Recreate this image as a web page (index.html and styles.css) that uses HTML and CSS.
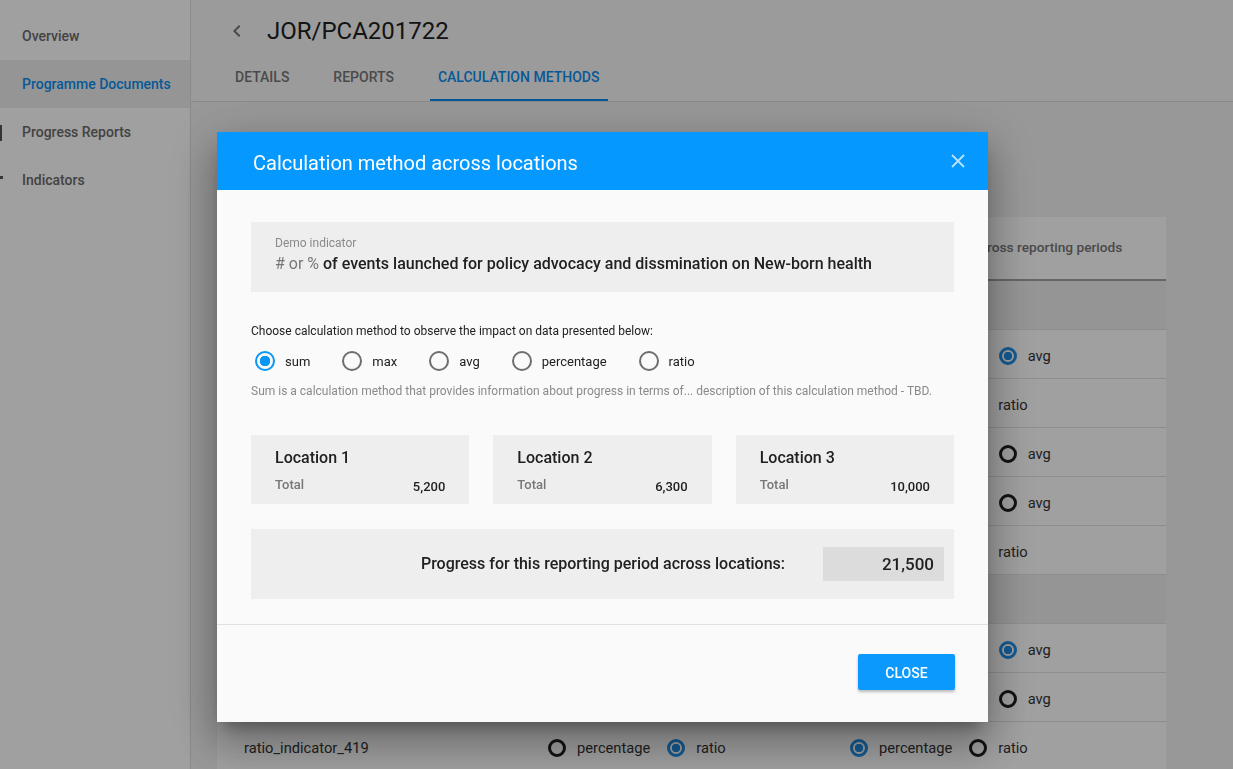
FILE: index.html
```html
<!DOCTYPE html>
<html>
<head>
<meta charset="utf-8">
<title>JOR/PCA201722 - Calculation methods</title>
<link rel="stylesheet" href="styles.css">
</head>
<body>
<div class="app">
  <aside class="sidebar">
    <a class="nav-item"><span class="nav-icon"></span>Overview</a>
    <a class="nav-item active"><span class="nav-icon"></span>Programme Documents</a>
    <a class="nav-item"><span class="nav-icon"><i class="mark-bar"></i></span>Progress Reports</a>
    <a class="nav-item"><span class="nav-icon"><i class="mark-sq"></i></span>Indicators</a>
  </aside>

  <main class="main">
    <header class="page-header">
      <div class="title-row">
        <svg class="back" viewBox="0 0 24 24" width="24" height="24"><path d="M15.41 7.41L14 6l-6 6 6 6 1.41-1.41L10.83 12z"/></svg>
        <h1 class="title">JOR/PCA201722</h1>
      </div>
      <nav class="tabs">
        <span class="tab">Details</span>
        <span class="tab">Reports</span>
        <span class="tab active">Calculation methods</span>
      </nav>
    </header>

    <section class="content">
      <div class="table-card">
        <div class="t-row t-head">
          <div class="c1"></div>
          <div class="c2"></div>
          <div class="c3">Calculation method across reporting periods</div>
        </div>
        <div class="t-row t-section"><div class="c1"></div></div>
        <div class="t-row">
          <div class="c1"></div><div class="c2"></div>
          <div class="c3"><span class="opt"><i class="rb"></i>sum</span><span class="opt"><i class="rb"></i>max</span><span class="opt"><i class="rb on"></i>avg</span></div>
        </div>
        <div class="t-row">
          <div class="c1"></div><div class="c2"></div>
          <div class="c3"><span class="opt"><i class="rb on"></i>percentage</span><span class="opt"><i class="rb"></i>ratio</span></div>
        </div>
        <div class="t-row">
          <div class="c1"></div><div class="c2"></div>
          <div class="c3"><span class="opt"><i class="rb on"></i>sum</span><span class="opt"><i class="rb"></i>max</span><span class="opt"><i class="rb"></i>avg</span></div>
        </div>
        <div class="t-row">
          <div class="c1"></div><div class="c2"></div>
          <div class="c3"><span class="opt"><i class="rb"></i>sum</span><span class="opt"><i class="rb on"></i>max</span><span class="opt"><i class="rb"></i>avg</span></div>
        </div>
        <div class="t-row">
          <div class="c1"></div><div class="c2"></div>
          <div class="c3"><span class="opt"><i class="rb on"></i>percentage</span><span class="opt"><i class="rb"></i>ratio</span></div>
        </div>
        <div class="t-row t-section"><div class="c1"></div></div>
        <div class="t-row">
          <div class="c1"></div><div class="c2"></div>
          <div class="c3"><span class="opt"><i class="rb"></i>sum</span><span class="opt"><i class="rb"></i>max</span><span class="opt"><i class="rb on"></i>avg</span></div>
        </div>
        <div class="t-row">
          <div class="c1"></div><div class="c2"></div>
          <div class="c3"><span class="opt"><i class="rb on"></i>sum</span><span class="opt"><i class="rb"></i>max</span><span class="opt"><i class="rb"></i>avg</span></div>
        </div>
        <div class="t-row">
          <div class="c1">ratio_indicator_419</div>
          <div class="c2"><span class="opt"><i class="rb"></i>percentage</span><span class="opt"><i class="rb on"></i>ratio</span></div>
          <div class="c3"><span class="opt"><i class="rb on"></i>percentage</span><span class="opt"><i class="rb"></i>ratio</span></div>
        </div>
      </div>
    </section>
  </main>
</div>

<div class="overlay">
  <div class="dialog">
    <div class="dlg-header">
      <h2 class="dlg-title">Calculation method across locations</h2>
      <svg class="dlg-close" viewBox="0 0 14 14" width="14" height="14"><path d="M1 1L13 13M13 1L1 13"/></svg>
    </div>
    <div class="dlg-body">
      <div class="indicator-box">
        <div class="ind-label">Demo indicator</div>
        <div class="ind-title"><span class="ind-type"># or %</span> of events launched for policy advocacy and dissmination on New-born health</div>
      </div>

      <p class="choose">Choose calculation method to observe the impact on data presented below:</p>
      <div class="methods">
        <label class="m-opt"><i class="mr on"></i>sum</label>
        <label class="m-opt"><i class="mr"></i>max</label>
        <label class="m-opt"><i class="mr"></i>avg</label>
        <label class="m-opt"><i class="mr"></i>percentage</label>
        <label class="m-opt"><i class="mr"></i>ratio</label>
      </div>
      <p class="desc">Sum is a calculation method that provides information about progress in terms of... description of this calculation method - TBD.</p>

      <div class="locations">
        <div class="loc-card">
          <div class="loc-name">Location 1</div>
          <div class="loc-row"><span class="loc-label">Total</span><span class="loc-val">5,200</span></div>
        </div>
        <div class="loc-card">
          <div class="loc-name">Location 2</div>
          <div class="loc-row"><span class="loc-label">Total</span><span class="loc-val">6,300</span></div>
        </div>
        <div class="loc-card">
          <div class="loc-name">Location 3</div>
          <div class="loc-row"><span class="loc-label">Total</span><span class="loc-val">10,000</span></div>
        </div>
      </div>

      <div class="progress-box">
        <span class="progress-label">Progress for this reporting period across locations:</span>
        <span class="progress-val">21,500</span>
      </div>
    </div>
    <div class="dlg-footer">
      <button class="btn-close">Close</button>
    </div>
  </div>
</div>
</body>
</html>
```

FILE: styles.css
```css
* { box-sizing: border-box; margin: 0; padding: 0; }

html, body { height: 100%; }

body {
  font-family: Roboto, "Noto Sans", "Liberation Sans", Arial, sans-serif;
  background: #f3f3f3;
  color: #212121;
  overflow: hidden;
}

/* ---------- background page ---------- */
.app {
  display: flex;
  height: 769px;
}

.sidebar {
  width: 191px;
  flex: none;
  background: #fff;
  border-right: 1px solid #dcdcdc;
  padding-top: 12px;
}

.nav-item {
  display: flex;
  align-items: center;
  height: 48px;
  font-size: 14px;
  font-weight: 500;
  color: #6b6b6b;
  text-decoration: none;
}

.nav-item.active {
  background: #eeeeee;
  color: #0b8ef0;
}

.nav-icon {
  width: 22px;
  flex: none;
  height: 20px;
  display: flex;
  align-items: center;
}

.mark-bar {
  display: block;
  width: 2px;
  height: 16px;
  background: #555;
  margin-top: 2px;
}

.mark-sq {
  display: block;
  width: 3px;
  height: 3px;
  background: #555;
  margin-top: -6px;
}

.main {
  flex: 1;
  display: flex;
  flex-direction: column;
  min-width: 0;
}

.page-header {
  background: #f8f8f8;
  border-bottom: 1px solid #dcdcdc;
}

.title-row {
  height: 54px;
  display: flex;
  align-items: center;
  padding: 8px 0 0 34px;
  gap: 18px;
}

.back { fill: #757575; flex: none; }

.title {
  font-size: 24px;
  font-weight: 400;
  color: #212121;
  line-height: 30px;
}

.tabs {
  display: flex;
  gap: 27px;
  padding-left: 36px;
  height: 47px;
}

.tab {
  display: flex;
  align-items: center;
  padding: 1px 9px 0 8px;
  font-size: 14px;
  font-weight: 500;
  text-transform: uppercase;
  color: #777;
  border-bottom: 2px solid transparent;
}

.tab.active {
  color: #0b8ef0;
  border-bottom-color: #0b8ef0;
}

.content {
  padding: 115px 0 0 26px;
}

.table-card {
  width: 949px;
  background: #fff;
}

.t-row {
  display: grid;
  grid-template-columns: 331px 302px 1fr;
  align-items: center;
  height: 49px;
  padding-top: 3px;
  border-bottom: 1px solid #e3e3e3;
  font-size: 14.7px;
  color: #333;
}

.t-row .c1 { padding-left: 27px; }
.t-row .c2, .t-row .c3 { display: flex; align-items: center; }

.t-head {
  height: 64px;
  padding-top: 0;
  padding-bottom: 2px;
  border-bottom: 2px solid #a3a3a3;
  font-size: 13.7px;
  font-weight: 500;
  color: #777;
}

.t-section {
  background: #eeeeee;
  font-weight: 500;
}

.opt {
  display: flex;
  align-items: center;
  gap: 11px;
  margin-right: 17px;
}

.rb {
  width: 18px;
  height: 18px;
  border-radius: 50%;
  border: 3px solid #1e1e1e;
  flex: none;
}

.rb.on {
  border-color: #1f8fe8;
  background: radial-gradient(circle, #1f8fe8 0 4px, #fff 4.5px);
}

/* ---------- overlay & dialog ---------- */
.overlay {
  position: fixed;
  inset: 0;
  background: rgba(0, 0, 0, 0.373);
}

.dialog {
  position: absolute;
  left: 217px;
  top: 132px;
  width: 771px;
  background: #fafafa;
  box-shadow: 0 11px 15px -7px rgba(0,0,0,.3), 0 24px 38px 3px rgba(0,0,0,.2), 0 9px 46px 8px rgba(0,0,0,.16);
}

.dlg-header {
  height: 58px;
  background: #0598fe;
  display: flex;
  align-items: center;
  justify-content: space-between;
  padding: 3px 23px 0 36px;
}

.dlg-title {
  font-size: 20px;
  font-weight: 400;
  color: #fff;
}

.dlg-close {
  stroke: rgba(255, 255, 255, 0.72);
  stroke-width: 1.8;
  fill: none;
  margin-top: -3px;
}

.dlg-body {
  padding: 32px 34px 25px;
  border-bottom: 1px solid #e0e0e0;
}

.indicator-box {
  height: 70px;
  background: #eeeeee;
  padding: 13px 24px 0;
}

.ind-label {
  font-size: 12px;
  line-height: 16px;
  color: #8a8a8a;
}

.ind-title {
  margin-top: 2px;
  font-size: 16px;
  line-height: 22px;
  font-weight: 500;
  color: #212121;
}

.ind-type {
  font-weight: 400;
  color: #777;
}

.choose {
  margin-top: 31px;
  font-size: 12px;
  line-height: 17px;
  color: #212121;
}

.methods {
  margin-top: 11px;
  display: flex;
  align-items: center;
  height: 20px;
  padding-left: 4px;
}

.m-opt {
  display: flex;
  align-items: center;
  gap: 10px;
  margin-right: 32px;
  font-size: 13px;
  color: #212121;
}

.mr {
  width: 20px;
  height: 20px;
  border-radius: 50%;
  border: 2px solid #6e6e6e;
  flex: none;
}

.mr.on {
  border-color: #0a96f5;
  background: radial-gradient(circle, #0a96f5 0 5px, transparent 5.5px);
}

.desc {
  margin-top: 12px;
  font-size: 12px;
  line-height: 16px;
  color: #8a8a8a;
}

.locations {
  margin-top: 36px;
  display: flex;
  gap: 24px;
}

.loc-card {
  flex: 1;
  height: 69px;
  background: #eeeeee;
  padding: 13px 24px 0;
}

.loc-name {
  font-size: 16px;
  line-height: 20px;
  font-weight: 500;
  color: #212121;
}

.loc-row {
  margin-top: 8px;
  display: flex;
  justify-content: space-between;
  align-items: flex-start;
  font-size: 13px;
  line-height: 18px;
}

.loc-label {
  font-weight: 500;
  color: #777;
}

.loc-val {
  padding-top: 2px;
  color: #212121;
  font-weight: 500;
}

.progress-box {
  margin-top: 25px;
  height: 70px;
  background: #eeeeee;
  display: flex;
  align-items: center;
  justify-content: flex-end;
  padding-right: 10px;
  gap: 38px;
}

.progress-label {
  font-size: 16px;
  font-weight: 500;
  color: #212121;
  margin-top: -1px;
}

.progress-val {
  width: 121px;
  height: 34px;
  background: #dcdcdc;
  display: flex;
  align-items: center;
  justify-content: flex-end;
  padding-right: 10px;
  font-size: 17px;
  font-weight: 500;
  color: #212121;
}

.dlg-footer {
  display: flex;
  justify-content: flex-end;
  padding: 29px 33px 32px;
}

.btn-close {
  width: 97px;
  height: 36px;
  border: none;
  border-radius: 2px;
  background: #0b99fd;
  color: #fff;
  font-family: inherit;
  font-size: 14px;
  font-weight: 500;
  text-transform: uppercase;
  padding-top: 1px;
  box-shadow: 0 2px 3px rgba(0,0,0,.25);
}
```
